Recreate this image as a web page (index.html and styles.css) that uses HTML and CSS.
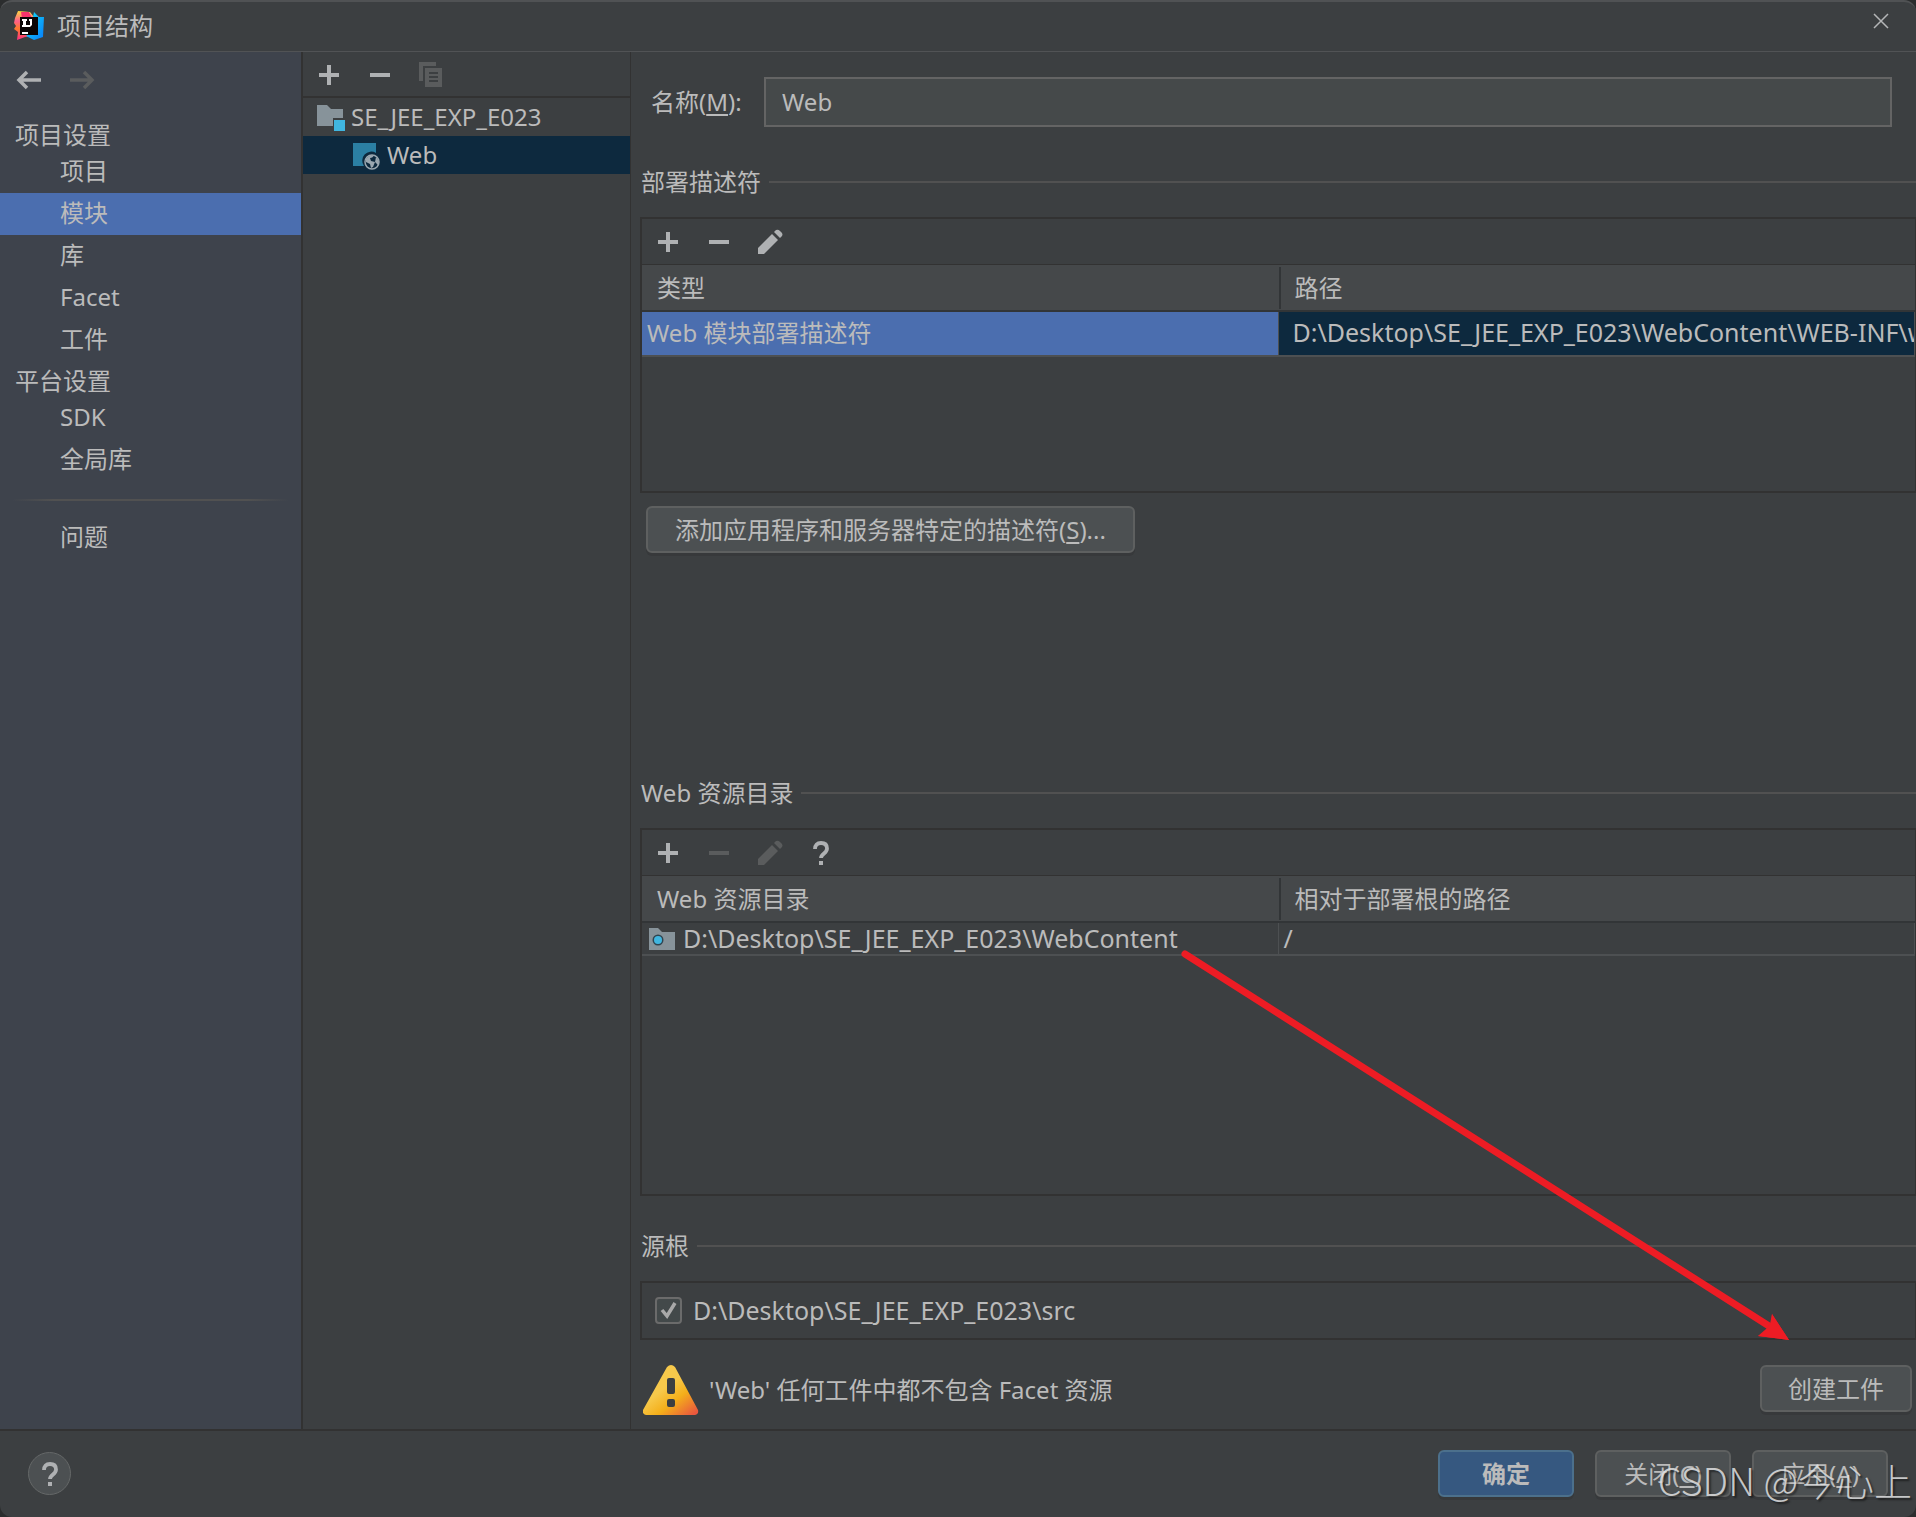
FILE: index.html
```html
<!DOCTYPE html>
<html lang="zh-CN">
<head>
<meta charset="utf-8">
<title>项目结构</title>
<link rel="stylesheet" href="styles.css">
</head>
<body>
<svg class="symbols" aria-hidden="true">
  <symbol id="i-plus" viewBox="0 0 26 26"><path d="M11 3h4v8h8v4h-8v8h-4v-8H3v-4h8z" fill="currentColor"/></symbol>
  <symbol id="i-minus" viewBox="0 0 26 26"><path d="M3 11h20v4H3z" fill="currentColor"/></symbol>
  <symbol id="i-copy" viewBox="0 0 26 26"><path d="M1 0h17v4H5v15H1z" fill="currentColor"/><path fill-rule="evenodd" d="M7 6h17v19H7zM11 10v2h9v-2zM11 14v2h9v-2zM11 18v2h9v-2z" fill="currentColor"/></symbol>
  <symbol id="i-pencil" viewBox="0 0 26 26"><path d="M1 19L15 5l6 6L7 25H1z" fill="currentColor"/><path d="M17 3l2-2q2-1 4 1l2 2q1 2 0 3l-2 2z" fill="currentColor"/></symbol>
  <symbol id="i-help" viewBox="0 0 26 26"><path d="M7 9Q7 3 13 3t6 5.500q0 2.500-3 5t-3 4.500" fill="none" stroke="currentColor" stroke-width="3.800"/><path d="M11 21h4v4h-4z" fill="currentColor"/></symbol>
</svg>
<div class="dialog">
  <header class="titlebar">
    <svg class="logo" viewBox="0 0 30 30" aria-hidden="true">
      <defs>
        <linearGradient id="g-left" x1="0" y1="0" x2="0" y2="1"><stop offset="0" stop-color="#fcd640"/><stop offset=".35" stop-color="#ff5f8a"/><stop offset=".6" stop-color="#fd7a2c"/><stop offset="1" stop-color="#ff2f86"/></linearGradient>
        <linearGradient id="g-right" x1="0" y1="0" x2="1" y2="1"><stop offset="0" stop-color="#14e0f5"/><stop offset="1" stop-color="#087cfa"/></linearGradient>
      </defs>
      <path d="M4 0l12 1 4 5v19l-9 1-8 3 1-8-4-3 2-3-2-3 1-5z" fill="url(#g-left)"/>
      <path d="M7 1l8 0 3 6H8z" fill="#f8336b"/>
      <path d="M20 1l5 5 5 0-1 20-9 3-8-4 7-6V6z" fill="url(#g-right)"/>
      <path d="M6 6h18v18H6z" fill="#0a0505"/>
      <path d="M8 8h5v2h-1v4h1v2H8v-2h1v-4H8zM15 8h3v6l-2 2h-3v-2h3v-4h-1zM8 21h6v2H8z" fill="#fff"/>
    </svg>
    <h1 class="title">项目结构</h1>
    <button class="close" aria-label="关闭窗口"><svg viewBox="0 0 16 16"><path d="M1 1l14 14M15 1L1 15" stroke="#b4b6b7" stroke-width="1.500"/></svg></button>
  </header>

  <div class="main">
    <nav class="sidebar">
      <div class="history">
        <button class="tool" aria-label="后退"><svg class="icon" viewBox="0 0 26 26"><path d="M25 13H3M11 5l-8 8 8 8" fill="none" stroke="currentColor" stroke-width="3.500"/></svg></button>
        <button class="tool" aria-label="前进" disabled><svg class="icon" viewBox="0 0 26 26"><path d="M1 13h22M15 5l8 8-8 8" fill="none" stroke="currentColor" stroke-width="3.500"/></svg></button>
      </div>
      <h2 class="group">项目设置</h2>
      <a class="item" href="#project">项目</a>
      <a class="item current" href="#modules">模块</a>
      <a class="item" href="#libraries">库</a>
      <a class="item" href="#facets">Facet</a>
      <a class="item" href="#artifacts">工件</a>
      <h2 class="group">平台设置</h2>
      <a class="item" href="#sdk">SDK</a>
      <a class="item" href="#global">全局库</a>
      <hr class="fade">
      <a class="item" href="#problems">问题</a>
    </nav>

    <section class="modules">
      <div class="toolbar">
        <button class="tool" aria-label="添加"><svg class="icon"><use href="#i-plus"/></svg></button>
        <button class="tool" aria-label="移除"><svg class="icon"><use href="#i-minus"/></svg></button>
        <button class="tool" aria-label="复制" disabled><svg class="icon"><use href="#i-copy"/></svg></button>
      </div>
      <ul class="tree">
        <li class="node">
          <svg class="node-icon" viewBox="0 0 30 28"><path d="M1 1h10l4 4h12v9H17v8H1z" fill="#87939a"/><path d="M18 16h11v11H18z" fill="#40b6e0"/></svg>
          <span>SE_JEE_EXP_E023</span>
        </li>
        <li class="node child selected">
          <svg class="node-icon" viewBox="0 0 30 28"><path d="M1 1h23v10a9 9 0 0 0-12 13H1z" fill="#2b7fa3"/><circle cx="20" cy="20" r="7" fill="none" stroke="#9aa7b0" stroke-width="1.500"/><path d="M14 17q3-4 8-4-1 3-4 3l1 3 4 1-2 5-2 1-1-4-4-2zM24 15l3 4-1 4-3-3z" fill="#9aa7b0"/></svg>
          <span>Web</span>
        </li>
      </ul>
    </section>

    <main class="editor">
      <div class="name-row">
        <label for="name">名称(<u>M</u>):</label>
        <input id="name" class="field" type="text" value="Web">
      </div>

      <section class="block descriptors">
        <h2 class="legend">部署描述符</h2>
        <div class="panel short">
          <div class="toolbar">
            <button class="tool" aria-label="添加"><svg class="icon"><use href="#i-plus"/></svg></button>
            <button class="tool" aria-label="移除"><svg class="icon"><use href="#i-minus"/></svg></button>
            <button class="tool" aria-label="编辑"><svg class="icon"><use href="#i-pencil"/></svg></button>
          </div>
          <table class="grid">
            <thead><tr><th>类型</th><th>路径</th></tr></thead>
            <tbody><tr class="tall"><td class="focus">Web 模块部署描述符</td><td class="picked path-text">D:\Desktop\SE_JEE_EXP_E023\WebContent\WEB-INF\web.xml</td></tr></tbody>
          </table>
        </div>
        <button class="button wide">添加应用程序和服务器特定的描述符(<u>S</u>)...</button>
      </section>

      <section class="block">
        <h2 class="legend">Web 资源目录</h2>
        <div class="panel long">
          <div class="toolbar">
            <button class="tool" aria-label="添加"><svg class="icon"><use href="#i-plus"/></svg></button>
            <button class="tool" aria-label="移除" disabled><svg class="icon"><use href="#i-minus"/></svg></button>
            <button class="tool" aria-label="编辑" disabled><svg class="icon"><use href="#i-pencil"/></svg></button>
            <button class="tool" aria-label="帮助"><svg class="icon"><use href="#i-help"/></svg></button>
          </div>
          <table class="grid">
            <thead><tr><th>Web 资源目录</th><th>相对于部署根的路径</th></tr></thead>
            <tbody><tr><td><div class="path path-text"><svg class="icon" viewBox="0 0 26 26"><path d="M0 2h9l4 4h13v18H0z" fill="#87939a"/><circle cx="9" cy="14" r="5.500" fill="#2f4450"/><circle cx="9" cy="14" r="4" fill="#40b6e0"/></svg>D:\Desktop\SE_JEE_EXP_E023\WebContent</div></td><td class="path-text">/</td></tr></tbody>
          </table>
        </div>
      </section>

      <section class="block">
        <h2 class="legend">源根</h2>
        <div class="panel roots">
          <label class="root path-text"><input class="check" type="checkbox" checked>D:\Desktop\SE_JEE_EXP_E023\src</label>
        </div>
      </section>

      <div class="notice">
        <svg class="warning" viewBox="0 0 56 50" aria-hidden="true">
          <defs><linearGradient id="g-warn" x1=".2" y1=".2" x2=".9" y2="1"><stop offset=".3" stop-color="#f7c94b"/><stop offset=".6" stop-color="#f4af1a"/><stop offset="1" stop-color="#e9573e"/></linearGradient></defs>
          <path fill-rule="evenodd" d="M24 2q4-4 8 0l23 43q1 4-3 5H3q-4-1-3-5zM26 13q-2 0-2 2v12q0 2 2 2h4q2 0 2-2V15q0-2-2-2zM26 34q-2 0-2 2v4q0 2 2 2h4q2 0 2-2v-4q0-2-2-2z" fill="url(#g-warn)"/>
        </svg>
        <p class="message">'Web' 任何工件中都不包含 Facet 资源</p>
        <button class="button create">创建工件</button>
      </div>
    </main>
  </div>

  <footer class="footer">
    <button class="help" aria-label="帮助"><svg class="icon"><use href="#i-help"/></svg></button>
    <button class="button action primary">确定</button>
    <button class="button action">关闭(<u>C</u>)</button>
    <button class="button action">应用(<u>A</u>)</button>
  </footer>

  <svg class="arrow" viewBox="0 0 612 396" aria-hidden="true">
    <path d="M6 8L590 380" stroke="#ed1c24" stroke-width="7" stroke-linecap="round"/>
    <path d="M610 394l-17-26-2 10-5 8-7 4z" fill="#ed1c24"/>
    <path d="M610 394l-31-4 8-7 5-6 1-9z" fill="#ed1c24"/>
  </svg>
  <div class="watermark">CSDN @今心上</div>
</div>
</body>
</html>
```
FILE: styles.css
```css
* { box-sizing: border-box; }

body {
  margin: 0;
  background: #2b2d2e;
  color: #bbbbbb;
  font: 24px/32px "Noto Sans", "Noto Sans CJK SC", sans-serif;
}

h1, h2, p, ul {
  margin: 0;
  padding: 0;
  font-size: 24px;
  font-weight: 400;
}

button, input {
  font: inherit;
  color: inherit;
}

u { text-underline-offset: 3px; }

.symbols { display: none; }

.dialog {
  position: relative;
  display: flex;
  flex-direction: column;
  min-height: 100vh;
  overflow: hidden;
  background: #3c3f41;
  border-top: 2px solid #505254;
  border-radius: 12px;
}

.titlebar {
  display: flex;
  align-items: center;
  height: 50px;
  padding: 0 27px 2px 14px;
  border-bottom: 1px solid #515355;
}

.logo { width: 30px; height: 30px; }

.title { flex: 1; margin-left: 13px; }

.close {
  width: 16px;
  height: 16px;
  margin-bottom: 10px;
  padding: 0;
  border: 0;
  background: none;
}

.close svg { display: block; }

.main { display: flex; flex: 1; }

.sidebar {
  flex: 0 0 303px;
  background: #3e434c;
  border-right: 2px solid #323232;
}

.history {
  display: flex;
  gap: 27px;
  padding: 15px 16px 22px;
}

.tool {
  display: block;
  padding: 0;
  border: 0;
  background: none;
  color: #afb1b3;
}

.tool:disabled { color: #5a5c5d; }

.icon { display: block; width: 26px; height: 26px; }

.group { margin-top: 4px; padding-left: 15px; }

.item {
  display: block;
  padding: 4px 0 6px 60px;
  color: inherit;
  text-decoration: none;
}

.current { background: #4b6eaf; }

.fade {
  height: 2px;
  margin: 18px 12px 16px;
  border: 0;
  background: linear-gradient(90deg, transparent, #515151 15%, #515151 85%, transparent);
}

.modules {
  flex: 0 0 328px;
  border-right: 1px solid #323232;
}

.toolbar {
  display: flex;
  align-items: center;
  gap: 25px;
  height: 46px;
  padding-left: 13px;
  border-bottom: 1px solid #323232;
}

.modules .toolbar { padding-top: 2px; border-bottom-width: 2px; }

.tree { list-style: none; }

.node {
  display: flex;
  align-items: center;
  gap: 5px;
  height: 38px;
  padding-left: 13px;
}

.child { padding-left: 49px; }

.selected { background: #0d293e; }

.node-icon { width: 30px; height: 28px; margin-top: 2px; }

.editor {
  display: flex;
  flex: 1;
  flex-direction: column;
  min-width: 0;
  padding: 25px 0 14px;
}

.name-row {
  display: grid;
  grid-template-columns: 113px 1fr;
  align-items: center;
  margin: 0 24px 39px 20px;
}

.field {
  width: 100%;
  height: 50px;
  padding: 0 16px 2px;
  border: 2px solid #646464;
  border-radius: 0;
  background: #45494a;
}

.block { padding-left: 9px; }

.block + .block { margin-top: 34px; }

.descriptors { flex: 1; }

.descriptors + .block { margin-top: 0; }

.legend {
  display: flex;
  align-items: center;
  gap: 8px;
  margin-bottom: 19px;
  padding-left: 1px;
}

.legend::after {
  content: "";
  flex: 1;
  height: 2px;
  background: #515151;
}

.panel {
  border: 2px solid #323232;
  border-right-width: 1px;
}

.short { height: 276px; }

.long { height: 368px; }

.grid {
  width: 100%;
  table-layout: fixed;
  border-collapse: separate;
  border-spacing: 0;
}

.grid th {
  height: 47px;
  padding: 0 15px;
  border-bottom: 2px solid #323537;
  background: #45484a;
  font-weight: 400;
  text-align: left;
}

.grid th:last-child {
  padding-left: 16px;
  background: linear-gradient(#323537, #323537) left / 2px 42px no-repeat #45484a;
}

.grid td {
  height: 33px;
  padding: 0 5px;
  border-right: 1px solid #4d5052;
  border-bottom: 2px solid #4d5052;
  line-height: 31px;
  white-space: nowrap;
}

.grid .tall td { height: 45px; padding-bottom: 2px; }

.grid .focus { background: #4b6eaf; }

.grid .picked {
  padding: 0 0 0 14px;
  overflow: hidden;
  background: #0d293e;
}

.path-text { font-size: 25px; }

.path {
  display: flex;
  align-items: center;
  gap: 8px;
  padding-left: 2px;
}

.button {
  height: 47px;
  padding: 0 26px;
  border: 2px solid #5e6060;
  border-radius: 6px;
  background: #4c5052;
  box-shadow: 0 3px 0 #37393b;
}

.wide { margin: 13px 0 0 6px; padding: 0 27px; }

.roots { padding: 11px 13px 12px; }

.root {
  display: flex;
  align-items: center;
  gap: 11px;
}

.check {
  width: 27px;
  height: 27px;
  margin: 0;
  appearance: none;
  border: 2px solid #6b6b6b;
  border-radius: 4px;
  background: #43494a;
}

.check:checked {
  background-image: url("data:image/svg+xml,%3Csvg xmlns='http://www.w3.org/2000/svg' viewBox='0 0 23 23'%3E%3Cpath d='M5 11l5 6 8-13' fill='none' stroke='%23a9a9a9' stroke-width='3.500'/%3E%3C/svg%3E");
}

.notice {
  display: flex;
  align-items: center;
  margin-top: 25px;
  padding: 0 4px 0 12px;
}

.warning { width: 56px; height: 50px; }

.message { flex: 1; margin-left: 10px; }

.create { align-self: flex-start; }

.footer {
  display: flex;
  align-items: center;
  gap: 21px;
  height: 88px;
  padding: 0 28px 1px 28px;
  border-top: 2px solid #323232;
}

.help {
  width: 43px;
  height: 43px;
  margin-right: auto;
  padding: 8px;
  border: 1px solid #656868;
  border-radius: 50%;
  background: #4c5052;
  color: #afb1b3;
}

.action { width: 136px; padding: 0; }

.primary {
  border-color: #4c708c;
  background: #365880;
  font-weight: 700;
}

.arrow {
  position: absolute;
  top: 944px;
  left: 1179px;
  width: 612px;
  height: 396px;
  pointer-events: none;
}

.watermark {
  position: absolute;
  right: 4px;
  bottom: 13px;
  color: rgba(225, 226, 227, .85);
  font: 300 38px/48px "Noto Sans CJK SC", sans-serif;
  text-shadow: 2px 2px 2px rgba(0, 0, 0, .5);
  pointer-events: none;
}
```
